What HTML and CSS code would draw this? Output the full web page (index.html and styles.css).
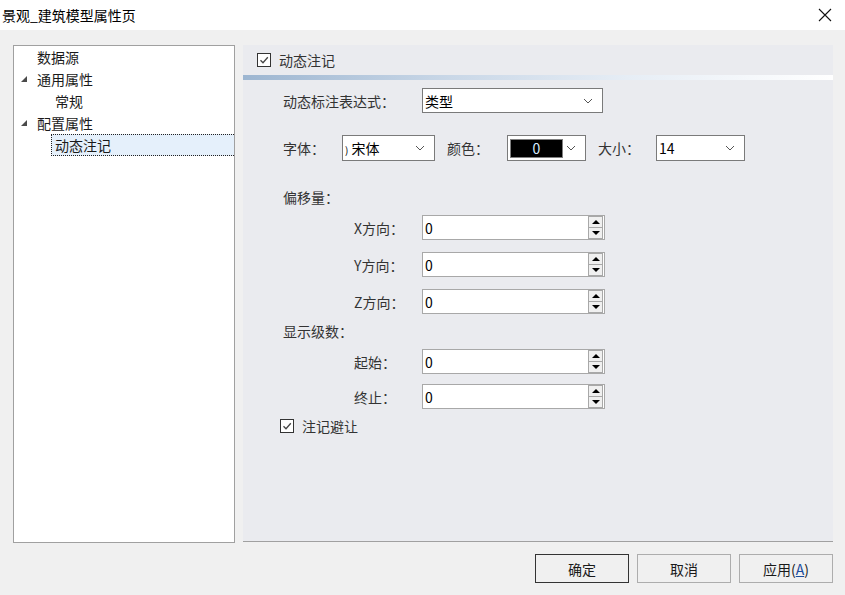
FILE: index.html
```html
<!DOCTYPE html>
<html lang="zh">
<head>
<meta charset="utf-8">
<link rel="stylesheet" href="styles.css">
</head>
<body>
<div class="win">
  <div class="titlebar">
    <span class="title">景观_建筑模型属性页</span>
    <svg class="close" width="14" height="14" viewBox="0 0 14 14"><path d="M1 1L13 13M13 1L1 13" stroke="#111" stroke-width="1.1" fill="none"/></svg>
  </div>
  <div class="main">
    <div class="tree">
      <div class="node lvl0"><span class="tw"></span>数据源</div>
      <div class="node lvl0"><span class="tw"><svg width="6" height="6" viewBox="0 0 6 6"><polygon points="6,0 6,6 0,6" fill="#4a4a4a"/></svg></span>通用属性</div>
      <div class="node lvl1">常规</div>
      <div class="node lvl0"><span class="tw"><svg width="6" height="6" viewBox="0 0 6 6"><polygon points="6,0 6,6 0,6" fill="#4a4a4a"/></svg></span>配置属性</div>
      <div class="node sel"><span class="seltext">动态注记</span></div>
    </div>
    <div class="panel">
      <div class="phead">
        <span class="chk"><svg width="12" height="12" viewBox="0 0 12 12"><path d="M2.5 6.2L5 8.7L9.8 3.3" stroke="#444" stroke-width="1.3" fill="none"/></svg></span>
        <span class="htext">动态注记</span>
      </div>
      <div class="gradbar"></div>
      <div class="form">
        <div class="row r1">
          <span class="lbl w139">动态标注表达式：</span>
          <div class="sel-box w181"><span class="val">类型</span><svg class="chev" width="10" height="6" viewBox="0 0 10 6"><path d="M1 1L5 5L9 1" stroke="#555" stroke-width="1" fill="none"/></svg></div>
        </div>
        <div class="row r2">
          <span class="lbl w59">字体：</span>
          <div class="sel-box w93"><span class="val"><span class="clip">)</span> 宋体</span><svg class="chev" width="10" height="6" viewBox="0 0 10 6"><path d="M1 1L5 5L9 1" stroke="#555" stroke-width="1" fill="none"/></svg></div>
          <span class="lbl w60 ml12">颜色：</span>
          <div class="sel-box w79 color"><span class="swatch">0</span><svg class="chev" width="10" height="6" viewBox="0 0 10 6"><path d="M1 1L5 5L9 1" stroke="#555" stroke-width="1" fill="none"/></svg></div>
          <span class="lbl w58 ml12">大小：</span>
          <div class="sel-box w89"><span class="val">14</span><svg class="chev" width="10" height="6" viewBox="0 0 10 6"><path d="M1 1L5 5L9 1" stroke="#555" stroke-width="1" fill="none"/></svg></div>
        </div>
        <div class="group g1">偏移量：</div>
        <div class="row spin-row first">
          <span class="lbl w68">X方向：</span>
          <div class="spin"><span class="val">0</span><span class="btns"><span class="up"></span><span class="dn"></span></span></div>
        </div>
        <div class="row spin-row">
          <span class="lbl w68">Y方向：</span>
          <div class="spin"><span class="val">0</span><span class="btns"><span class="up"></span><span class="dn"></span></span></div>
        </div>
        <div class="row spin-row">
          <span class="lbl w68">Z方向：</span>
          <div class="spin"><span class="val">0</span><span class="btns"><span class="up"></span><span class="dn"></span></span></div>
        </div>
        <div class="group g2">显示级数：</div>
        <div class="row spin-row first">
          <span class="lbl w68">起始：</span>
          <div class="spin"><span class="val">0</span><span class="btns"><span class="up"></span><span class="dn"></span></span></div>
        </div>
        <div class="row spin-row gap11">
          <span class="lbl w68">终止：</span>
          <div class="spin"><span class="val">0</span><span class="btns"><span class="up"></span><span class="dn"></span></span></div>
        </div>
        <div class="row chk-row">
          <span class="chk"><svg width="12" height="12" viewBox="0 0 12 12"><path d="M2.5 6.2L5 8.7L9.8 3.3" stroke="#444" stroke-width="1.3" fill="none"/></svg></span>
          <span class="htext">注记避让</span>
        </div>
      </div>
    </div>
  </div>
  <div class="footer">
    <button class="btn default">确定</button>
    <button class="btn">取消</button>
    <button class="btn">应用(<u>A</u>)</button>
  </div>
</div>
</body>
</html>
```
FILE: styles.css
```css
* { box-sizing: border-box; }
html, body { margin: 0; padding: 0; }
body {
  width: 845px; height: 595px; overflow: hidden;
  background: #f0f0f0;
  font-family: "Noto Sans CJK SC", "Noto Sans", sans-serif;
  font-size: 14px; color: #1a1a1a;
}
.win { width: 845px; height: 595px; display: flex; flex-direction: column; }
.titlebar {
  height: 30px; background: #fff; display: flex; align-items: center;
  justify-content: space-between; padding: 0 13px 0 2px; flex: none;
}
.title { font-size: 14px; color: #000; line-height: 1; }
.close { display: block; }
.main { display: flex; padding: 15px 12px 0 13px; gap: 8px; flex: none; }
.tree {
  width: 222px; height: 498px; background: #fff; border: 1px solid #a0a0a0; flex: none;
}
.node { height: 22px; display: flex; align-items: center; line-height: 1; color: #1a1a1a; }
.lvl0 { padding-left: 7px; }
.tw { width: 16px; display: inline-flex; justify-content: flex-start; }
.lvl1 { padding-left: 41px; }
.sel { padding-left: 37px; }
.seltext {
  flex: 1; height: 22px; display: flex; align-items: center; padding-left: 3px;
  background: #e5f0fb; border: 1px dotted #222; border-right: none;
}
.panel {
  width: 590px; height: 497px; background: #eaebef; border-bottom: 1px solid #a0a0a0; flex: none;
}
.phead { height: 30px; display: flex; align-items: center; padding-left: 14px; gap: 8px; }
.chk {
  width: 14px; height: 14px; border: 1px solid #333; background: #fff;
  display: inline-flex; align-items: center; justify-content: center; flex: none;
}
.htext { color: #333; line-height: 1; }
.gradbar { height: 5px; background: linear-gradient(to right, #9db6d1, #c9d7e7 35%, #e6edf5 65%, #ffffff); }
.form { padding: 8px 0 0 40px; display: flex; flex-direction: column; }
.row { display: flex; align-items: center; }
.lbl { color: #333; line-height: 1; flex: none; }
.w139 { width: 139px; } .w59 { width: 59px; } .w60 { width: 60px; } .w58 { width: 58px; } .w68 { width: 68px; }
.ml12 { margin-left: 12px; }
.sel-box {
  height: 25px; background: #fff; border: 1px solid #7a7a7a; display: flex;
  align-items: center; justify-content: space-between; padding: 0 9px 0 2px; flex: none;
}
.r2 .sel-box { height: 26px; }
.w181 { width: 181px; } .w93 { width: 93px; } .w79 { width: 79px; } .w89 { width: 89px; }
.val { color: #000; line-height: 1; }
.clip { font-size: 10px; }
.r2 { margin-top: 22px; }
.color { padding-left: 2px; }
.swatch {
  width: 53px; height: 19px; background: #000; color: #d8ecff; border: 1px solid #808080;
  display: flex; align-items: center; justify-content: center; line-height: 1;
}
.group { color: #333; line-height: 20px; height: 20px; }
.g1 { margin-top: 26px; }
.g2 { margin-top: 7px; }
.spin-row { padding-left: 71px; margin-top: 12px; }
.spin-row.first { margin-top: 8px; }
.spin-row.gap11 { margin-top: 10px; }
.spin {
  width: 183px; height: 25px; background: #fff; border: 1px solid #a8a8a8;
  display: flex; align-items: center; justify-content: space-between; padding: 0 1px 0 2px;
}
.btns { display: flex; flex-direction: column; width: 15px; height: 23px; }
.up, .dn {
  flex: 1; background: #f0f0f0; border: 1px solid #a8a8a8; position: relative;
}
.dn { border-top: none; }
.up::after, .dn::after {
  content: ""; position: absolute; left: 3px; width: 0; height: 0;
  border-left: 4px solid transparent; border-right: 4px solid transparent;
}
.up::after { top: 3px; border-bottom: 4px solid #000; }
.dn::after { top: 3px; border-top: 4px solid #000; }
.chk-row { margin-top: 10px; margin-left: -3px; gap: 8px; }
.footer { display: flex; justify-content: flex-end; gap: 8px; padding: 11px 12px 0 0; }
.btn {
  width: 94px; height: 29px; background: #f0f0f0; border: 1px solid #adadad;
  font-family: inherit; font-size: 14px; color: #1a1a1a; padding: 0; line-height: 1;
}
.btn.default { border-color: #333; }
.btn u { color: #1a4c9c; }
```
